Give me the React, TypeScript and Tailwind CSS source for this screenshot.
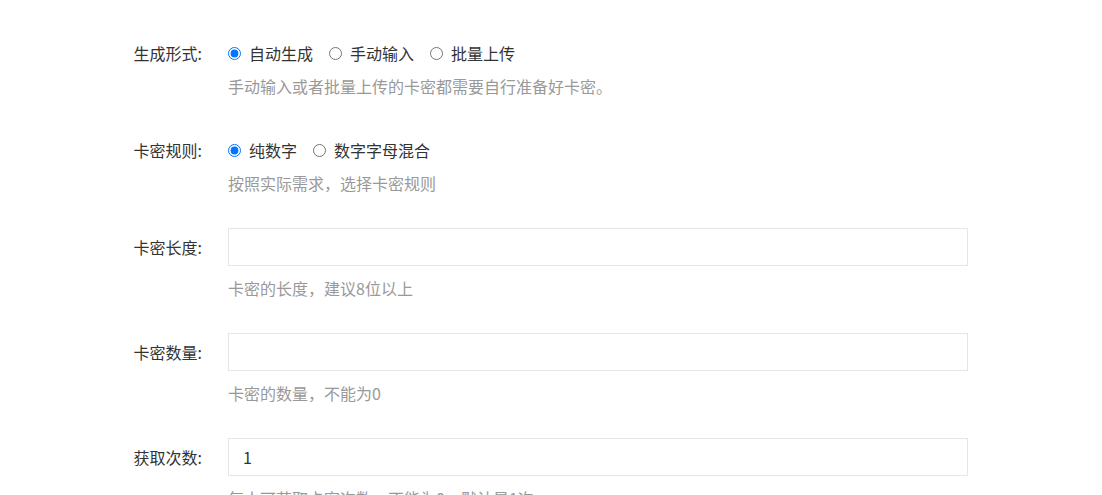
import { useState } from 'react';

interface RadioOption {
  value: string;
  label: string;
}

function RadioGroup({ name, options, initial }: { name: string; options: RadioOption[]; initial: string }) {
  const [value, setValue] = useState(initial);
  return (
    <div className="flex h-[38px] items-center gap-[16px]">
      {options.map((o) => (
        <label key={o.value} className="flex items-center cursor-pointer text-[16px] text-[#333]">
          <input
            type="radio"
            name={name}
            checked={value === o.value}
            onChange={() => setValue(o.value)}
            className="m-0 mr-[8px] h-[13px] w-[13px] accent-[#0075ff]"
          />
          {o.label}
        </label>
      ))}
    </div>
  );
}

function FormItem({
  label,
  hint,
  radio,
  children,
}: {
  label: string;
  hint: string;
  radio?: boolean;
  children: React.ReactNode;
}) {
  return (
    <div className="mb-[35px] flex">
      <div className="flex h-[38px] w-[125px] shrink-0 items-center justify-end pr-[26px] text-[16px] text-[#333]">
        {label}:
      </div>
      <div className="flex flex-col">
        {children}
        <p className={`${radio ? 'mt-[4px]' : 'mt-[12px]'} text-[16px] leading-[20px] text-[#999]`}>{hint}</p>
      </div>
    </div>
  );
}

function TextInput({ defaultValue = '' }: { defaultValue?: string }) {
  return (
    <input
      type="text"
      defaultValue={defaultValue}
      className="h-[38px] w-[740px] border border-[#e6e6e6] bg-white px-[14px] text-[16px] text-[#333] outline-none focus:border-[#c9c9c9]"
    />
  );
}

export default function App() {
  return (
    <div
      className="min-h-[495px] bg-white pl-[103px] pt-[34px]"
      style={{ fontFamily: '"Noto Sans CJK SC", "Noto Sans", sans-serif' }}
    >
      {/* 生成形式 */}
      <FormItem label="生成形式" hint="手动输入或者批量上传的卡密都需要自行准备好卡密。" radio>
        <RadioGroup
          name="mode"
          initial="auto"
          options={[
            { value: 'auto', label: '自动生成' },
            { value: 'manual', label: '手动输入' },
            { value: 'upload', label: '批量上传' },
          ]}
        />
      </FormItem>

      {/* 卡密规则 */}
      <FormItem label="卡密规则" hint="按照实际需求，选择卡密规则" radio>
        <RadioGroup
          name="rule"
          initial="num"
          options={[
            { value: 'num', label: '纯数字' },
            { value: 'mix', label: '数字字母混合' },
          ]}
        />
      </FormItem>

      <FormItem label="卡密长度" hint="卡密的长度，建议8位以上">
        <TextInput />
      </FormItem>

      <FormItem label="卡密数量" hint="卡密的数量，不能为0">
        <TextInput />
      </FormItem>

      <FormItem label="获取次数" hint="每人可获取卡密次数，不能为0，默认是1次">
        <TextInput defaultValue="1" />
      </FormItem>
    </div>
  );
}
